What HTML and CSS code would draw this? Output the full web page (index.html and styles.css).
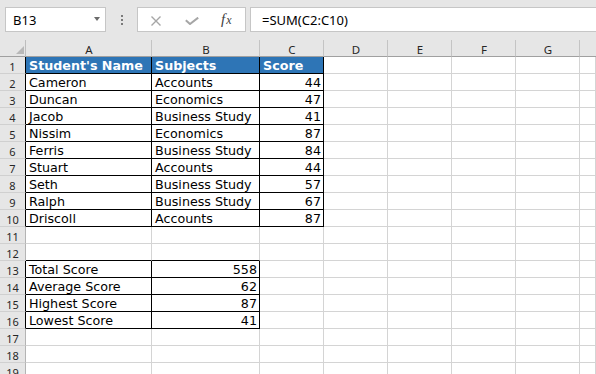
FILE: index.html
```html
<!DOCTYPE html>
<html lang="en">
<head>
    <meta charset="UTF-8">
    <meta name="viewport" content="width=device-width, initial-scale=1.0">
    <title>Scores</title>
    <link rel="stylesheet" href="styles.css">
</head>
<body>
    <div class="formula-bar">
        <div class="name-box">
            <span>B13</span>
            <span class="caret"></span>
        </div>
        <svg class="dots" width="2" height="10" viewBox="0 0 2 10">
            <rect x="0" y="0" width="2" height="2" fill="#7a7a7a"/>
            <rect x="0" y="4" width="2" height="2" fill="#7a7a7a"/>
            <rect x="0" y="8" width="2" height="2" fill="#7a7a7a"/>
        </svg>
        <div class="fx-box">
            <svg class="icon-cancel" width="10" height="10" viewBox="0 0 10 10">
                <path d="M0.5 0.5 L9.5 9.5 M9.5 0.5 L0.5 9.5" stroke="#a6a6a6" stroke-width="1.4" fill="none"/>
            </svg>
            <svg class="icon-enter" width="14" height="8" viewBox="0 0 14 8">
                <path d="M0.8 3.2 L5 7 L13.2 0.6" stroke="#a6a6a6" stroke-width="2" fill="none"/>
            </svg>
            <span class="fx"><i>f</i><i class="sub">x</i></span>
        </div>
        <div class="formula">=SUM(C2:C10)</div>
    </div>

    <div class="sheet">
        <div class="row">
            <div class="cell corner"><span class="tri"></span></div>
            <div class="cell ch">A</div>
            <div class="cell ch">B</div>
            <div class="cell ch">C</div>
            <div class="cell ch">D</div>
            <div class="cell ch">E</div>
            <div class="cell ch">F</div>
            <div class="cell ch">G</div>
            <div class="cell ch last"></div>
        </div>

        <div class="row">
            <div class="cell rh edge">1</div>
            <div class="cell box hd">Student's Name</div>
            <div class="cell box hd">Subjects</div>
            <div class="cell box hd">Score</div>
            <div class="cell"></div><div class="cell"></div><div class="cell"></div><div class="cell"></div><div class="cell"></div>
        </div>
        <div class="row">
            <div class="cell rh edge">2</div>
            <div class="cell box">Cameron</div>
            <div class="cell box">Accounts</div>
            <div class="cell box num">44</div>
            <div class="cell"></div><div class="cell"></div><div class="cell"></div><div class="cell"></div><div class="cell"></div>
        </div>
        <div class="row">
            <div class="cell rh edge">3</div>
            <div class="cell box">Duncan</div>
            <div class="cell box">Economics</div>
            <div class="cell box num">47</div>
            <div class="cell"></div><div class="cell"></div><div class="cell"></div><div class="cell"></div><div class="cell"></div>
        </div>
        <div class="row">
            <div class="cell rh edge">4</div>
            <div class="cell box">Jacob</div>
            <div class="cell box">Business Study</div>
            <div class="cell box num">41</div>
            <div class="cell"></div><div class="cell"></div><div class="cell"></div><div class="cell"></div><div class="cell"></div>
        </div>
        <div class="row">
            <div class="cell rh edge">5</div>
            <div class="cell box">Nissim</div>
            <div class="cell box">Economics</div>
            <div class="cell box num">87</div>
            <div class="cell"></div><div class="cell"></div><div class="cell"></div><div class="cell"></div><div class="cell"></div>
        </div>
        <div class="row">
            <div class="cell rh edge">6</div>
            <div class="cell box">Ferris</div>
            <div class="cell box">Business Study</div>
            <div class="cell box num">84</div>
            <div class="cell"></div><div class="cell"></div><div class="cell"></div><div class="cell"></div><div class="cell"></div>
        </div>
        <div class="row">
            <div class="cell rh edge">7</div>
            <div class="cell box">Stuart</div>
            <div class="cell box">Accounts</div>
            <div class="cell box num">44</div>
            <div class="cell"></div><div class="cell"></div><div class="cell"></div><div class="cell"></div><div class="cell"></div>
        </div>
        <div class="row">
            <div class="cell rh edge">8</div>
            <div class="cell box">Seth</div>
            <div class="cell box">Business Study</div>
            <div class="cell box num">57</div>
            <div class="cell"></div><div class="cell"></div><div class="cell"></div><div class="cell"></div><div class="cell"></div>
        </div>
        <div class="row">
            <div class="cell rh edge">9</div>
            <div class="cell box">Ralph</div>
            <div class="cell box">Business Study</div>
            <div class="cell box num">67</div>
            <div class="cell"></div><div class="cell"></div><div class="cell"></div><div class="cell"></div><div class="cell"></div>
        </div>
        <div class="row">
            <div class="cell rh edge">10</div>
            <div class="cell box">Driscoll</div>
            <div class="cell box">Accounts</div>
            <div class="cell box num">87</div>
            <div class="cell"></div><div class="cell"></div><div class="cell"></div><div class="cell"></div><div class="cell"></div>
        </div>

        <div class="row">
            <div class="cell rh">11</div>
            <div class="cell"></div><div class="cell"></div><div class="cell"></div><div class="cell"></div><div class="cell"></div><div class="cell"></div><div class="cell"></div><div class="cell"></div>
        </div>
        <div class="row">
            <div class="cell rh">12</div>
            <div class="cell top"></div><div class="cell top"></div><div class="cell"></div><div class="cell"></div><div class="cell"></div><div class="cell"></div><div class="cell"></div><div class="cell"></div>
        </div>

        <div class="row">
            <div class="cell rh edge">13</div>
            <div class="cell box">Total Score</div>
            <div class="cell box num">558</div>
            <div class="cell"></div><div class="cell"></div><div class="cell"></div><div class="cell"></div><div class="cell"></div><div class="cell"></div>
        </div>
        <div class="row">
            <div class="cell rh edge">14</div>
            <div class="cell box">Average Score</div>
            <div class="cell box num">62</div>
            <div class="cell"></div><div class="cell"></div><div class="cell"></div><div class="cell"></div><div class="cell"></div><div class="cell"></div>
        </div>
        <div class="row">
            <div class="cell rh edge">15</div>
            <div class="cell box">Highest Score</div>
            <div class="cell box num">87</div>
            <div class="cell"></div><div class="cell"></div><div class="cell"></div><div class="cell"></div><div class="cell"></div><div class="cell"></div>
        </div>
        <div class="row">
            <div class="cell rh edge">16</div>
            <div class="cell box">Lowest Score</div>
            <div class="cell box num">41</div>
            <div class="cell"></div><div class="cell"></div><div class="cell"></div><div class="cell"></div><div class="cell"></div><div class="cell"></div>
        </div>

        <div class="row">
            <div class="cell rh">17</div>
            <div class="cell"></div><div class="cell"></div><div class="cell"></div><div class="cell"></div><div class="cell"></div><div class="cell"></div><div class="cell"></div><div class="cell"></div>
        </div>
        <div class="row">
            <div class="cell rh">18</div>
            <div class="cell"></div><div class="cell"></div><div class="cell"></div><div class="cell"></div><div class="cell"></div><div class="cell"></div><div class="cell"></div><div class="cell"></div>
        </div>
        <div class="row">
            <div class="cell rh">19</div>
            <div class="cell"></div><div class="cell"></div><div class="cell"></div><div class="cell"></div><div class="cell"></div><div class="cell"></div><div class="cell"></div><div class="cell"></div>
        </div>
    </div>
</body>
</html>
```

FILE: styles.css
```css
/* Excel-like sheet */

body {
    margin: 0;
    overflow: hidden;
    background-color: #fff;
    color: #000;
}

/* formula bar */

.formula-bar {
    display: flex;
    align-items: flex-start;
    height: 40px;
    padding: 7px 0 0 5px;
    box-sizing: border-box;
    background-color: #e6e6e6;
    font-family: "Noto Sans", sans-serif;
    font-size: 13px;
}

.name-box {
    display: flex;
    align-items: center;
    justify-content: space-between;
    width: 101px;
    height: 25px;
    padding: 0 5px 0 7px;
    box-sizing: border-box;
    background-color: #fff;
    border: 1px solid #c6c6c6;
}

.caret {
    width: 0;
    height: 0;
    border-left: 3.5px solid transparent;
    border-right: 3.5px solid transparent;
    border-top: 4px solid #6b6b6b;
    margin-bottom: 2px;
}

.dots {
    margin: 8px 14px 0 15px;
}

.fx-box {
    display: flex;
    align-items: center;
    width: 109px;
    height: 25px;
    padding-left: 13px;
    box-sizing: border-box;
    background-color: #fff;
    border: 1px solid #c6c6c6;
}

.icon-cancel {
    margin-top: 2px;
}

.icon-enter {
    margin: 3px 0 0 24px;
}

.fx {
    margin-left: 22px;
    font-family: "Liberation Serif", serif;
    font-size: 15px;
    color: #404040;
}

.fx .sub {
    font-size: 12px;
    margin-left: 1px;
}

.formula {
    flex: 1;
    height: 25px;
    margin-left: 4px;
    padding: 1px 0 0 11px;
    box-sizing: border-box;
    background-color: #fff;
    border: 1px solid #c6c6c6;
    border-right: none;
    line-height: 22px;
}

/* grid */

.row {
    display: grid;
    grid-template-columns: 26px 126px 108px 64px 64px 64px 64px 64px 1fr;
}

.cell {
    height: 17px;
    box-sizing: border-box;
    padding: 1px 2px 0 3px;
    border-right: 1px solid #d4d4d4;
    border-bottom: 1px solid #d4d4d4;
    font-family: "DejaVu Sans", Verdana, sans-serif;
    font-size: 12.7px;
    line-height: 16px;
    white-space: nowrap;
}

.corner {
    display: flex;
    align-items: flex-end;
    justify-content: flex-end;
    padding: 0 1px 2px 0;
    background-color: #e6e6e6;
    border-right-color: #bdbdbd;
    border-bottom-color: #a0a0a0;
}

.tri {
    width: 0;
    height: 0;
    border-left: 8px solid transparent;
    border-bottom: 8px solid #b8b8b8;
}

.ch {
    padding-top: 2px;
    background-color: #e6e6e6;
    border-right-color: #c4c4c4;
    border-bottom-color: #a0a0a0;
    text-align: center;
    font-family: "Noto Sans", sans-serif;
    font-size: 11.5px;
    line-height: 15px;
    color: #262626;
}

.ch.last {
    border-right: none;
}

.rh {
    padding: 2px 0 0 0;
    background-color: #e6e6e6;
    border-right-color: #b4b4b4;
    border-bottom-color: #d0d0d0;
    text-align: center;
    font-family: "Noto Sans", sans-serif;
    font-size: 11px;
    line-height: 15px;
    color: #262626;
    overflow: hidden;
}

.rh.edge {
    border-right-color: #000;
}

.box {
    border-right-color: #000;
    border-bottom-color: #000;
}

.top {
    border-bottom-color: #000;
}

.hd {
    background-color: #2e75b6;
    color: #fff;
    font-weight: bold;
}

.num {
    text-align: right;
}
```
